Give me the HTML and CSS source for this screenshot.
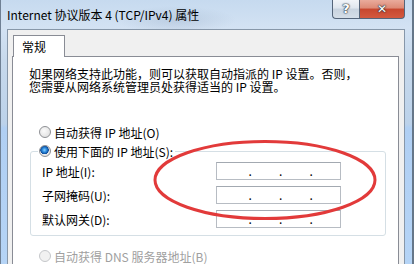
FILE: index.html
```html
<html>
<head>
  <title>Internet 协议版本 4 (TCP/IPv4) 属性</title>
  <link rel="stylesheet" href="styles.css">
</head>
<body>
  <div class="window">
    <div class="titlebar">
      <span class="title">Internet 协议版本 4 (TCP/IPv4) 属性</span>
      <div class="caption-btns">
        <button class="cap help">?</button>
        <button class="cap close">✕</button>
      </div>
    </div>

    <div class="client">
      <div class="tabs"><div class="tab">常规</div></div>

      <div class="panel">
        <p class="intro">如果网络支持此功能，则可以获取自动指派的 IP 设置。否则，<br>您需要从网络系统管理员处获得适当的 IP 设置。</p>

        <label class="radio first"><span class="dot-radio"></span>自动获得 IP 地址(O)</label>

        <fieldset class="group">
          <legend><label class="radio"><span class="dot-radio checked"></span>使用下面的 IP 地址(S):</label></legend>
          <div class="rows">
            <span class="lbl">IP 地址(I):</span>
            <div class="ip"><span class="oct a"></span><span class="sep">.</span><span class="oct"></span><span class="sep">.</span><span class="oct"></span><span class="sep">.</span><span class="oct"></span></div>
            <span class="lbl">子网掩码(U):</span>
            <div class="ip"><span class="oct a"></span><span class="sep">.</span><span class="oct"></span><span class="sep">.</span><span class="oct"></span><span class="sep">.</span><span class="oct"></span></div>
            <span class="lbl">默认网关(D):</span>
            <div class="ip"><span class="oct a"></span><span class="sep">.</span><span class="oct"></span><span class="sep">.</span><span class="oct"></span><span class="sep">.</span><span class="oct"></span></div>
          </div>
        </fieldset>

        <label class="radio disabled"><span class="dot-radio"></span>自动获得 DNS 服务器地址(B)</label>
      </div>
    </div>

    <!-- red marker drawn over the address fields -->
    <svg class="marker" width="230" height="88" viewBox="0 0 230 88">
      <ellipse cx="115" cy="43" rx="110" ry="38.5" fill="none" stroke="#e23a3a" stroke-width="3"/>
    </svg>
  </div>
</body>
</html>
```

FILE: styles.css
```css
html, body { margin:0; padding:0; }

body {
  font: 12px "Noto Sans CJK SC", "Liberation Sans", sans-serif;
  color:#000;
  overflow:hidden;
}

.window {
  position:relative;
  width:414px;
  height:264px;
  box-sizing:border-box;
  border-left:1px solid #6f8094;
  border-right:2px solid #667789;
  padding:0 7px 0 6px;
  overflow:hidden;
  background:
    radial-gradient(60px 14px at 175px 20px, rgba(150,170,195,0.35), rgba(150,170,195,0)),
    linear-gradient(to bottom, #c6daef 0, #d3e2f3 28px, #c7d9ec 60px, #bcd2ea 124px, #b0cff3 128px, #b5d4f6 100%);
}

/* title bar */
.titlebar {
  display:flex;
  justify-content:space-between;
  align-items:flex-start;
  height:29px;
}
.title {
  padding-top:8px;
  line-height:14px;
  font-size:12px;
  white-space:nowrap;
}
.caption-btns { display:flex; }
.cap {
  margin:0;
  height:19px;
  border:1px solid #55657a;
  border-top:none;
  padding:0;
  font: bold 13px "DejaVu Sans", sans-serif;
  color:#fff;
  text-shadow: 0 0 1px #27313d, 0 0 1px #27313d, 0 0 2px #27313d;
  line-height:16px;
}
.help {
  width:27px;
  border-right:none;
  border-radius:0 0 0 4px;
  background: linear-gradient(to bottom, #f1f4f8 0, #dfe6ee 45%, #c8d3df 50%, #d5dee8 100%);
}
.close {
  width:46px;
  border-radius:0 0 4px 0;
  font-size:12px;
  background: linear-gradient(to bottom, #e9ab9c 0, #dd8a76 45%, #c7472f 50%, #d4593f 100%);
}

/* dialog body */
.client {
  height:100%;
  box-sizing:border-box;
  border:1px solid #8797a9;
  border-bottom:none;
  background:#f0f0f0;
  padding:5px 5px 0 4px;
}
.tabs { display:flex; padding-left:1px; }
.tab {
  position:relative;
  z-index:1;
  width:52px;
  height:22px;
  box-sizing:border-box;
  border:1px solid #898c95;
  border-bottom:none;
  background:#fff;
  padding:4px 0 0 8px;
  line-height:13px;
  margin-bottom:-1px;
}
.panel {
  border:1px solid #898c95;
  background:#fff;
  height:220px;
  padding:10px 0 0 16px;
}

.intro {
  margin:0;
  line-height:13px;
  white-space:nowrap;
}

/* radio buttons */
.radio {
  display:flex;
  align-items:center;
  gap:3px;
  height:16px;
  white-space:nowrap;
}
.radio.first { margin:31px 0 0 10px; }
.radio.disabled { margin:12px 0 0 10px; color:#a0a0a0; }
.dot-radio {
  width:12px;
  height:12px;
  box-sizing:border-box;
  border-radius:50%;
  border:1px solid #8e9094;
  background: radial-gradient(circle at 40% 40%, #fbfbfb, #dadada);
}
.dot-radio.checked {
  background:
    radial-gradient(circle at 45% 40%, #8ed0ff 0, #2f8fe0 2px, #0d4b9a 4px, rgba(13,75,154,0) 4.5px),
    radial-gradient(circle at 40% 40%, #fbfbfb, #dadada);
}
.disabled .dot-radio { border-color:#c5c7ca; background:#f1f1f1; }

/* group box */
.group {
  margin:3px 12px 0 1px;
  border:1px solid #d5dfe5;
  border-radius:3px;
  padding:0 0 4px 11px;
}
.group legend {
  margin-left:-4px;
  padding:0 2px 0 1px;
}
.rows {
  display:grid;
  grid-template-columns:174px 125px;
  grid-auto-rows:24px;
  align-items:center;
}
.lbl { white-space:nowrap; }
.ip {
  display:flex;
  height:18px;
  box-sizing:border-box;
  border:1px solid #b7bcc3;
  border-top-color:#a3a9b1;
  line-height:16px;
}
.oct { width:28px; }
.oct.a { width:32px; }
.sep { width:3px; text-align:center; }

.marker {
  position:absolute;
  left:149px;
  top:137px;
}
```
